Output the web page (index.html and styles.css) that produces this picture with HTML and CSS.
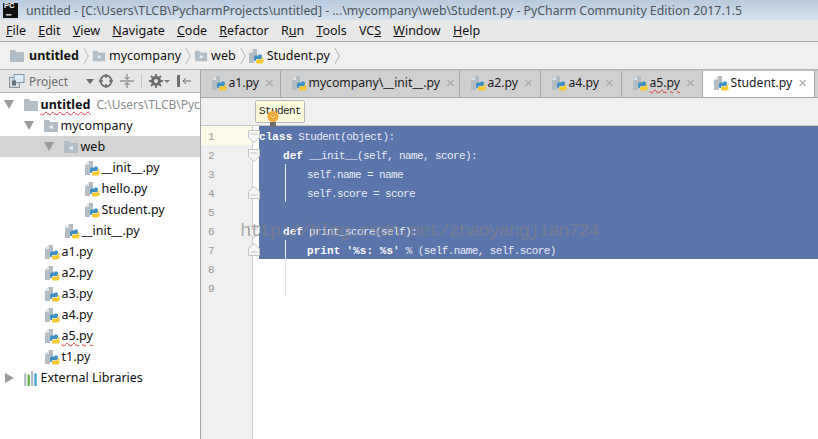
FILE: index.html
```html
<!DOCTYPE html>
<html lang="en">
<head>
<meta charset="utf-8">
<title>PyCharm</title>
<link rel="stylesheet" href="styles.css">
</head>
<body>
<svg class="defs" width="0" height="0" aria-hidden="true">
  <symbol id="py" viewBox="0 0 16 16">
    <path d="M1 5 5 1h4v7H6v7H1z" fill="#b4bcc4"/>
    <path d="M5 1v4H1z" fill="#dfe3e6"/>
    <path d="M6 9.500C6 7.800 7 7.500 8.500 7.500h2V6.400h2c1 0 1.500.8 1.500 2.100 0 1.300-.5 2.500-1.500 2.500H9.500C8 11 8 11.500 8 13H6.500C6 12 6 11 6 9.500z" fill="#3d8fc4"/>
    <path d="M15.500 9.500c0 2-.7 2.500-2 2.500h-1c-.8 0-1 .4-1 1v.8h2v1H10c-1.200 0-1.800-.5-1.800-1.800 0-1 .8-1.500 2-1.500h2.600c.7 0 1-.7 1-2.200z" fill="#f7c92f"/>
    <path d="M13 12h2.500c.5 0 .5 3-2 3.500H9.500c-1 0-1.500-.6-1.500-1.500 0-1.200.8-1.800 2-1.800z" fill="#f7c92f"/>
  </symbol>
  <symbol id="fold" viewBox="0 0 16 14">
    <path d="M1 1h5l1.500 2H15v10H1z" fill="#b3bdc6"/>
    <rect x="6.500" y="6.500" width="3.500" height="3" fill="#e8eef2"/>
  </symbol>
  <symbol id="foldroot" viewBox="0 0 16 14">
    <path d="M1 1h5l1.500 2H15v10H1z" fill="#b3bdc6"/>
  </symbol>
</svg>
<div class="app">
  <div class="titlebar">
    <svg class="pc" viewBox="0 0 16 16" width="15" height="15"><rect width="16" height="16" fill="#111"/><rect x="3" y="12" width="6" height="1.300" fill="#fff"/></svg>
    <span class="pclabel">PC</span>
    <span class="title">untitled - [C:\Users\TLCB\PycharmProjects\untitled] - ...\mycompany\web\Student.py - PyCharm Community Edition 2017.1.5</span>
  </div>
  <div class="menubar">
    <span><u>F</u>ile</span><span><u>E</u>dit</span><span><u>V</u>iew</span><span><u>N</u>avigate</span><span><u>C</u>ode</span><span><u>R</u>efactor</span><span>R<u>u</u>n</span><span><u>T</u>ools</span><span>VC<u>S</u></span><span><u>W</u>indow</span><span><u>H</u>elp</span>
  </div>
  <div class="navbar">
    <svg class="ic16"><use href="#foldroot"/></svg><b>untitled</b><i class="chev"></i>
    <svg class="ic16 sm"><use href="#fold"/></svg><span>mycompany</span><i class="chev"></i>
    <svg class="ic16 sm"><use href="#fold"/></svg><span>web</span><i class="chev"></i>
    <svg class="ic16 pyc"><use href="#py"/></svg><span>Student.py</span><i class="chev"></i>
  </div>
  <div class="main">
    <aside class="side">
      <div class="sidebar-tools">
        <svg class="proj" viewBox="0 0 16 14" width="16" height="14"><rect x=".5" y="3.500" width="10" height="10" fill="#d8dde2" stroke="#8c959c"/><rect x="5" y=".5" width="10" height="8" fill="#dfeaf5" stroke="#7d98b3"/><rect x="3" y="6.500" width="4" height="5" fill="#68727a"/></svg>
        <span class="proj-label">Project</span>
        <i class="tri-down"></i>
        <svg class="tool t1" viewBox="0 0 14 14" width="14" height="14"><circle cx="7" cy="7" r="5.500" fill="none" stroke="#6e6e6e" stroke-width="1.800"/><path d="M7 0v4M7 10v4M0 7h4M10 7h4" stroke="#6e6e6e" stroke-width="1.500"/></svg>
        <svg class="tool" viewBox="0 0 14 14" width="14" height="14"><path d="M0 7h14M7 0v5M7 14V9M4.500 3 7 5.500 9.500 3M4.500 11 7 8.500 9.500 11" fill="none" stroke="#6e6e6e"/></svg>
        <i class="sep"></i>
        <svg class="tool" viewBox="0 0 14 14" width="14" height="14"><circle cx="7" cy="7" r="3.500" fill="none" stroke="#6e6e6e" stroke-width="3"/><path d="M7 0v3M7 11v3M0 7h3M11 7h3M2 2l2 2M10 10l2 2M2 12l2-2M10 4l2-2" stroke="#6e6e6e" stroke-width="1.800"/></svg>
        <i class="tri-small"></i>
        <svg class="tool" viewBox="0 0 14 14" width="14" height="14"><path d="M1.500 1v12" stroke="#6e6e6e" stroke-width="3"/><path d="M14 7H6M9 4 6 7l3 3" fill="none" stroke="#6e6e6e"/></svg>
      </div>
      <ul class="tree">
        <li class="row l0"><i class="tw open"></i><svg class="ic16"><use href="#foldroot"/></svg><b class="err">untitled</b><span class="path">C:\Users\TLCB\PycharmProjects\untitled</span></li>
        <li class="row l1"><i class="tw open"></i><svg class="ic16"><use href="#fold"/></svg><span>mycompany</span></li>
        <li class="row l2 sel"><i class="tw open"></i><svg class="ic16"><use href="#fold"/></svg><span>web</span></li>
        <li class="row l3"><svg class="ic16"><use href="#py"/></svg><span>__init__.py</span></li>
        <li class="row l3"><svg class="ic16"><use href="#py"/></svg><span>hello.py</span></li>
        <li class="row l3"><svg class="ic16"><use href="#py"/></svg><span>Student.py</span></li>
        <li class="row l4"><svg class="ic16"><use href="#py"/></svg><span>__init__.py</span></li>
        <li class="row l5"><svg class="ic16"><use href="#py"/></svg><span>a1.py</span></li>
        <li class="row l5"><svg class="ic16"><use href="#py"/></svg><span>a2.py</span></li>
        <li class="row l5"><svg class="ic16"><use href="#py"/></svg><span>a3.py</span></li>
        <li class="row l5"><svg class="ic16"><use href="#py"/></svg><span>a4.py</span></li>
        <li class="row l5"><svg class="ic16"><use href="#py"/></svg><span class="err">a5.py</span></li>
        <li class="row l5"><svg class="ic16"><use href="#py"/></svg><span>t1.py</span></li>
        <li class="row l0"><i class="tw closed"></i><svg class="ic16" viewBox="0 0 14 14"><path d="M1 3h2v11H1z" fill="#b3bdc6"/><path d="M4 4h2v10H4z" fill="#62b543"/><path d="M7 1h2v13H7z" fill="#b3bdc6"/><path d="M10 3h2v11h-2z" fill="#40a0d0"/></svg><span>External Libraries</span></li>
      </ul>
    </aside>
    <section class="editor">
      <div class="tabs">
        <div class="tab w80"><svg class="ic16"><use href="#py"/></svg><span>a1.py</span><em>×</em></div>
        <div class="tab w179"><svg class="ic16"><use href="#py"/></svg><span>mycompany\__init__.py</span><em>×</em></div>
        <div class="tab w81"><svg class="ic16"><use href="#py"/></svg><span>a2.py</span><em>×</em></div>
        <div class="tab w81"><svg class="ic16"><use href="#py"/></svg><span>a4.py</span><em>×</em></div>
        <div class="tab w81"><svg class="ic16"><use href="#py"/></svg><span class="err">a5.py</span><em>×</em></div>
        <div class="tab active"><svg class="ic16"><use href="#py"/></svg><span>Student.py</span><em>×</em></div>
      </div>
      <div class="crumbs"></div>
      <div class="body">
        <div class="gutter">
          <div class="ln cur">1</div><div class="ln">2</div><div class="ln">3</div><div class="ln">4</div><div class="ln">5</div><div class="ln">6</div><div class="ln">7</div><div class="ln">8</div><div class="ln">9</div>
        </div>
        <div class="code">
          <div class="cl s"><b>class</b> Student(object):</div>
          <div class="cl s">    <b>def</b> __init__(self, name, score):</div>
          <div class="cl s">        self.name = name</div>
          <div class="cl s">        self.score = score</div>
          <div class="cl s"> </div>
          <div class="cl s">    <b>def</b> print_score(self):</div>
          <div class="cl s">        <b>print</b> <b>'%s: %s'</b> % (self.name, self.score)</div>
          <div class="cl"> </div>
          <div class="cl"> </div>
          <i class="guide g1"></i><i class="guide g2"></i><i class="guide g3"></i>
        </div>
        <svg class="marks" viewBox="0 0 14 140" width="14" height="140">
          <g fill="#f7f7f7" stroke="#c4c4c4">
            <path d="M1.500 4.500h11v7l-5.500 5-5.500-5z"/><path d="M3.500 8h7"/>
            <path d="M1.500 23.500h11v7l-5.500 5-5.500-5z"/><path d="M3.500 27h7"/>
            <path d="M1.500 72.500h11v-7l-5.500-5-5.500 5z"/><path d="M3.500 69h7"/>
            <path d="M1.500 100h11v7l-5.500 5-5.500-5z"/><path d="M3.500 103h7"/>
            <path d="M1.500 129.500h11v-7l-5.500-5-5.500 5z"/><path d="M3.500 126h7"/>
          </g>
        </svg>
      </div>
      <div class="tip">Student</div>
      <svg class="bulb" viewBox="0 0 12 16" width="12" height="16"><circle cx="6" cy="5.500" r="5.500" fill="#f5a93b"/><path d="M3.500 4.500l2.500 2.500 2.500-2.500" fill="none" stroke="#fbe0a8"/><rect x="3" y="11" width="6" height="5" fill="#6f6f6f"/></svg>
      <div class="mark">http://blog.csdn.net/zhaoyangjian724</div>
    </section>
  </div>
</div>
</body>
</html>
```
FILE: styles.css
```css
* { box-sizing: border-box; }
html, body { margin: 0; padding: 0; }
body { width: 818px; height: 439px; overflow: hidden; font-family: "Noto Sans", "Liberation Sans", sans-serif; font-size: 12.500px; color: #1a1a1a; background: #fff; }
.defs { position: absolute; }
.app { display: flex; flex-direction: column; height: 439px; position: relative; }
.titlebar { height: 20px; flex: none; display: flex; align-items: center; background: linear-gradient(#b8cade, #d6e1ec); padding-left: 3px; position: relative; }
.pc { flex: none; }
.pclabel { position: absolute; left: 4px; top: 1px; font: bold 7.500px/9px "Liberation Sans", sans-serif; color: #fff; }
.title { margin-left: 8px; color: #4b5660; white-space: nowrap; font-size: 12.300px; }
.menubar { height: 22px; flex: none; display: flex; align-items: center; background: #e8e8e8; border-bottom: 1px solid #a8a8a8; padding-left: 6px; gap: 12.200px; color: #111; }
.navbar { height: 28px; flex: none; display: flex; align-items: center; background: #f0f0f0; border-bottom: 1px solid #b4b4b4; padding-left: 9px; color: #111; }
.navbar b { margin-left: 4px; font-weight: 700; }
.navbar span { margin-left: 3px; }
.navbar .sm { margin-left: 3px; width: 14px; height: 14px; }
.navbar .pyc { margin-left: 2px; }
.chev { display: inline-block; height: 7px; margin: 0 1px 0 2px; width: 7px; position: relative; flex: none; }
.chev::after { content: ""; position: absolute; left: -3px; top: -2px; width: 11px; height: 11px; border-top: 1px solid #a8a8a8; border-right: 1px solid #a8a8a8; transform: scaleX(.55) rotate(45deg); }
.ic16 { width: 16px; height: 16px; flex: none; }
.main { flex: 1; display: flex; min-height: 0; }
.side { width: 200px; flex: none; display: flex; flex-direction: column; overflow: hidden; }
.sidebar-tools { height: 23px; flex: none; display: flex; align-items: center; background: #e6e6e6; border-bottom: 1px solid #b4b4b4; padding-left: 9px; }
.proj { flex: none; }
.proj-label { margin-left: 4px; color: #6d6d6d; font-size: 12px; }
.tri-down { margin-left: 18px; width: 0; height: 0; border: 4px solid transparent; border-top: 5px solid #6a6a6a; border-bottom: 0; }
.tool { margin-left: 7px; flex: none; }
.tool.t1 { margin-left: 5px; }
.sep { margin-left: 7px; width: 1px; height: 14px; background: #c4c4c4; }
.tri-small { margin-left: 1px; width: 0; height: 0; border: 3px solid transparent; border-top: 3px solid #777; border-bottom: 0; }
.tree { list-style: none; margin: 0; padding: 1px 0 0; }
.row { height: 21px; display: flex; align-items: center; white-space: nowrap; position: relative; color: #111; }
.row > span, .row > b { margin-left: 1.500px; }
.row.l0 { padding-left: 4px; }
.row.l1 { padding-left: 24px; }
.row.l2 { padding-left: 44px; }
.row.l3 { padding-left: 84px; }
.row.l4 { padding-left: 64px; }
.row.l5 { padding-left: 44px; }
.row.sel { background: #d4d4d4; }
.tw { width: 0; height: 0; margin-right: 9px; flex: none; }
.tw.open { border-left: 5px solid transparent; border-right: 5px solid transparent; border-top: 9px solid #9a9a9a; margin-left: 0; }
.tw.closed { border-top: 5px solid transparent; border-bottom: 5px solid transparent; border-left: 9px solid #9a9a9a; margin-left: 1px; }
.row .path { color: #8a8a8a; margin-left: 6px; font-size: 12px; }
.err { text-decoration: underline wavy #e03030 1px; text-underline-offset: 2px; }
.editor { flex: 1; display: flex; flex-direction: column; position: relative; min-width: 0; border-left: 1px solid #a4a4a4; }
.tabs { height: 28px; flex: none; display: flex; background: #d0d0d0; border-bottom: 1px solid #a8a8a8; border-top: 1px solid #c0c0c0; }
.tab { display: flex; align-items: center; padding: 0 0 3px 10px; border-right: 1px solid #a8a8a8; white-space: nowrap; color: #1a1a1a; flex: none; font-size: 12.200px; }
.tab span { margin-left: 1.500px; }
.tab em { font: normal 15px/16px "Liberation Sans", sans-serif; color: #a8a8a8; margin-left: 6px; }
.tab.w80 { width: 80px; }
.tab.w179 { width: 179px; }
.tab.w81 { width: 81px; }
.tab.active { background: #fff; width: 112px; }
.crumbs { height: 28px; flex: none; background: #f0f0f0; border-bottom: 1px solid #c8c8c8; }
.body { flex: 1; display: flex; position: relative; min-height: 0; }
.gutter { width: 52px; flex: none; background: #f0f0f0; border-right: 1px solid #cfcfcf; font: 11px/19px "Liberation Mono", monospace; color: #999; }
.ln { height: 19px; padding: 2px 0 0 7px; }
.ln.cur { background: #fefae8; }
.code { flex: 1; padding-left: 6px; position: relative; font: 11px/19px "Liberation Mono", monospace; letter-spacing: -.6px; color: #1a1a1a; }
.cl { height: 19px; padding-top: 2px; white-space: pre; }
.cl.s { background: #5a75aa; color: #e6ecf5; }
.cl b { letter-spacing: .07px; font-weight: 700; color: #fff; }
.guide { position: absolute; left: 32px; width: 1px; }
.g1 { top: 38px; height: 38px; background: #e8eef8; }
.g2 { top: 114px; height: 19px; background: #e8eef8; }
.g3 { top: 133px; height: 38px; background: #e2e2e2; }
.marks { position: absolute; left: 46px; top: 0; }
.tip { position: absolute; left: 54px; top: 30px; width: 50px; height: 23px; border: 1px solid #b8b8b8; border-radius: 2px; background: #fcfbdc; font: 11px/21px "Liberation Mono", monospace; letter-spacing: -.6px; text-align: center; color: #222; }
.bulb { position: absolute; left: 66px; top: 41px; }
.mark { position: absolute; left: 39px; top: 149px; font: 19px/24px "Liberation Mono", monospace; letter-spacing: -1.450px; color: rgba(130,130,130,.62); white-space: nowrap; pointer-events: none; }
```
